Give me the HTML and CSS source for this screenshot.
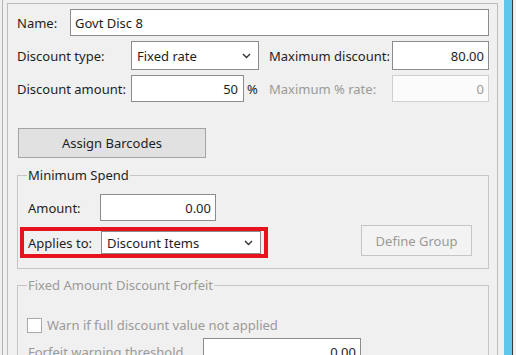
FILE: index.html
```html
<!DOCTYPE html>
<html>
<head>
    <link rel="stylesheet" href="styles.css">
</head>
<body>
    <div class="screen">
        <div class="edge"></div>

        <div class="panel">
            <div class="row row-name">
                <label class="lbl lbl-name">Name:</label>
                <div class="box grow">Govt Disc 8</div>
            </div>

            <div class="row row-type">
                <label class="lbl lbl-wide">Discount type:</label>
                <div class="box combo combo-type">
                    <span>Fixed rate</span>
                    <svg class="chev" width="9" height="6" viewBox="0 0 9 6"><polyline points="1,1 4.5,4.5 8,1" fill="none" stroke="#333" stroke-width="1.4"/></svg>
                </div>
                <label class="lbl lbl-max">Maximum discount:</label>
                <div class="box num grow">80.00</div>
            </div>

            <div class="row row-amount">
                <label class="lbl lbl-wide">Discount amount:</label>
                <div class="box num box-amount">50</div>
                <span class="pct">%</span>
                <label class="lbl lbl-max off">Maximum % rate:</label>
                <div class="box num grow disabled">0</div>
            </div>

            <button class="btn btn-barcodes">Assign Barcodes</button>

            <fieldset class="group group-spend">
                <legend>Minimum Spend</legend>
                <div class="row row-min">
                    <label class="lbl lbl-amount">Amount:</label>
                    <div class="box num box-min">0.00</div>
                </div>
                <div class="row row-applies">
                    <div class="highlight">
                        <label class="lbl lbl-applies">Applies to:</label>
                        <div class="box combo combo-applies">
                            <span>Discount Items</span>
                            <svg class="chev" width="9" height="6" viewBox="0 0 9 6"><polyline points="1,1 4.5,4.5 8,1" fill="none" stroke="#333" stroke-width="1.4"/></svg>
                        </div>
                    </div>
                    <button class="btn btn-group" disabled>Define Group</button>
                </div>
            </fieldset>

            <fieldset class="group group-forfeit">
                <legend class="off">Fixed Amount Discount Forfeit</legend>
                <div class="row row-check">
                    <span class="check"></span>
                    <span class="off">Warn if full discount value not applied</span>
                </div>
                <div class="row row-threshold">
                    <label class="lbl lbl-threshold off">Forfeit warning threshold</label>
                    <div class="box num box-threshold">0.00</div>
                </div>
            </fieldset>
        </div>

        <div class="gutter"></div>
        <div class="scrollbar"></div>
        <div class="rim"></div>
    </div>
</body>
</html>
```

FILE: styles.css
```css
/* Windows style form panel */
body {
    margin: 0;
    background: #f0f0f0;
    font-family: "Noto Sans", "Open Sans", sans-serif;
    font-size: 13px;
    color: #1e1e1e;
    overflow: hidden;
}

.screen {
    display: flex;
    width: 516px;
    height: 355px;
    overflow: hidden;
}

.edge {
    width: 5px;
    margin-left: 2px;
    border-left: 1px solid #b4b4b4;
    box-sizing: border-box;
}

.panel {
    width: 491px;
    margin-top: 3px;
    padding: 5px 8px 0 9px;
    border: 1px solid #bcbcbc;
    border-bottom: none;
    box-sizing: border-box;
}

.gutter {
    width: 6px;
}

.scrollbar {
    width: 8px;
    background: #5fc6ec;
}

.rim {
    width: 1px;
    background: #3a3a3a;
}

.row {
    display: flex;
    align-items: center;
}

.grow {
    flex: 1;
}

.off {
    color: #9a9a9a;
}

/* labels */
.lbl {
    white-space: nowrap;
}

.lbl-name {
    width: 53px;
}

.lbl-wide {
    width: 114px;
}

.lbl-max {
    width: 123px;
}

.row-type .lbl-max {
    margin-left: 10px;
}

.lbl-amount {
    width: 72px;
}

.lbl-applies {
    width: 73px;
}

.lbl-threshold {
    width: 175px;
}

/* text boxes */
.box {
    height: 100%;
    box-sizing: border-box;
    border: 1px solid #8c8c8c;
    background: #fff;
    padding: 0 4px;
    display: flex;
    align-items: center;
    white-space: nowrap;
}

.num {
    justify-content: flex-end;
}

.disabled {
    border-color: #cfcfcf;
    background: #fbfbfb;
    color: #9a9a9a;
}

.combo {
    justify-content: space-between;
    padding: 0 7px 0 5px;
}

.row-name {
    height: 27px;
}

.row-type {
    height: 29px;
    margin-top: 5px;
}

.row-amount {
    height: 27px;
    margin-top: 5px;
}

.combo-type {
    width: 128px;
}

.box-amount {
    width: 113px;
    padding-right: 5px;
}

.pct {
    width: 25px;
    padding-left: 3px;
    box-sizing: border-box;
}

/* buttons */
.btn {
    font: inherit;
    color: inherit;
    box-sizing: border-box;
    padding: 0;
}

.btn-barcodes {
    display: block;
    width: 188px;
    height: 30px;
    margin: 26px 0 0 1px;
    background: #e1e1e1;
    border: 1px solid #a3a3a3;
}

.btn-group {
    width: 111px;
    height: 31px;
    margin-left: auto;
    margin-right: 16px;
    background: #f3f3f3;
    border: 1px solid #c6c6c6;
    color: #9a9a9a;
}

/* group boxes */
.group {
    margin: 0;
    min-width: 0;
    border: 1px solid #c6c6c6;
    padding: 11px 0 10px 10px;
}

.group legend {
    padding: 0 1px;
    margin-left: -1px;
    line-height: 16px;
}

.group-spend {
    margin-top: 9px;
}

.row-min {
    height: 27px;
}

.box-min {
    width: 116px;
}

.row-applies {
    align-items: flex-start;
    margin-top: 4px;
}

.highlight {
    display: flex;
    align-items: center;
    height: 23px;
    margin: 2px 0 0 -8px;
    padding: 0 3px 0 4px;
    border: 4px solid #e5141c;
}

.combo-applies {
    width: 160px;
}

.group-forfeit {
    margin-top: 8px;
    padding-top: 23px;
}

.row-check {
    height: 18px;
}

.check {
    width: 15px;
    height: 15px;
    margin: 0 5px 0 -1px;
    border: 1px solid #a9a9a9;
    background: #fff;
    box-sizing: border-box;
}

.row-threshold {
    height: 27px;
    margin-top: 4px;
}

.box-threshold {
    width: 158px;
}
```
